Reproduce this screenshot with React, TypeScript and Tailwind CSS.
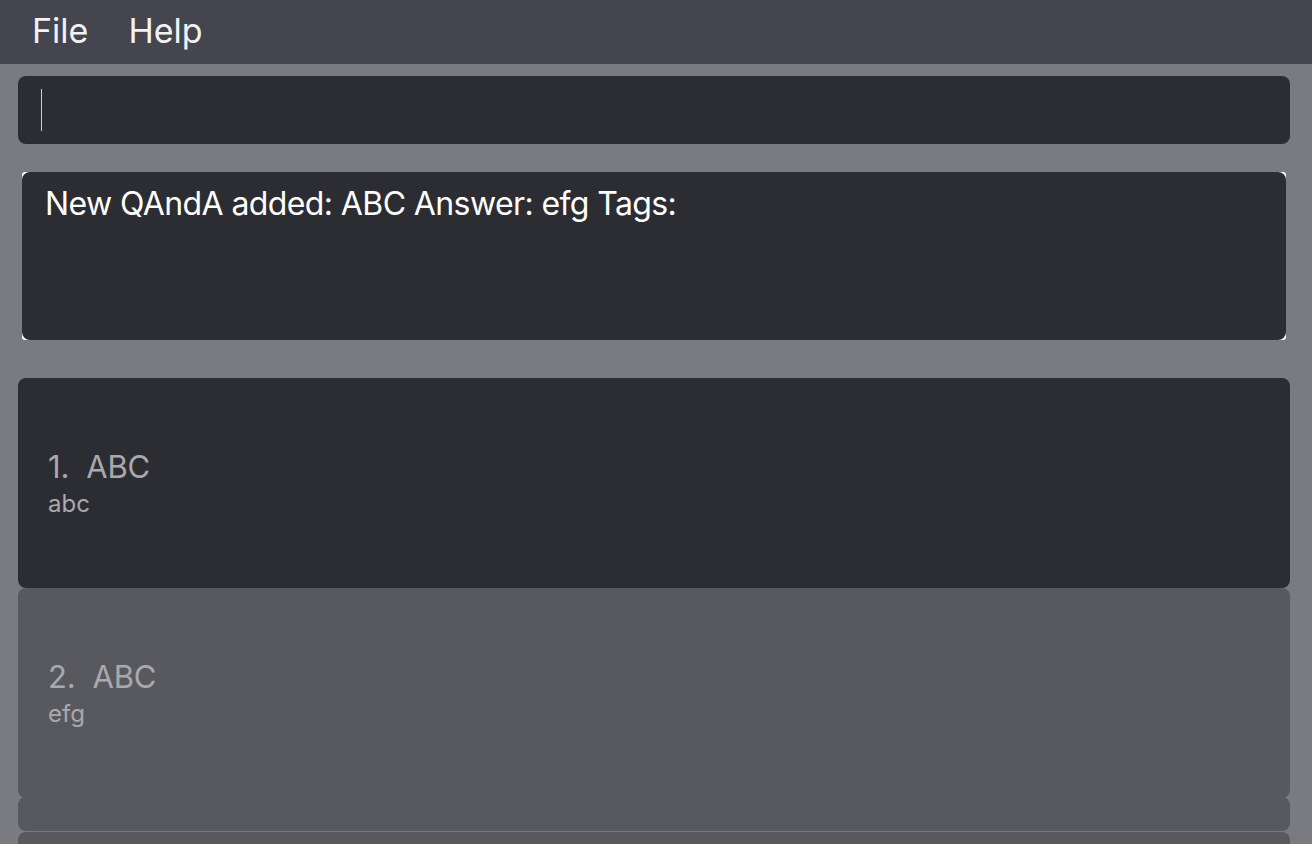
const cards = [
  { index: 1, question: "ABC", answer: "abc", selected: true },
  { index: 2, question: "ABC", answer: "efg", selected: false },
];

const App = () => {
  return (
    <div
      className="w-[1312px] h-[844px] overflow-hidden bg-[#7a7b80] flex flex-col"
      style={{ fontFamily: "Inter, 'Noto Sans', sans-serif" }}
    >
      <div className="h-[64px] shrink-0 bg-[#44454f] flex items-center pl-[32px] pb-[3px] gap-[40px] text-[34px] text-[#f2f2f2]">
        <span>File</span>
        <span>Help</span>
      </div>

      <div className="ml-[18px] mr-[22px] mt-[12px] h-[68px] shrink-0 rounded-[8px] bg-[#2c2d33] flex items-center pl-[23px]">
        <div className="w-[1px] h-[42px] bg-[#cfcfd2]" />
      </div>

      <div className="ml-[22px] mr-[26px] mt-[28px] h-[168px] shrink-0 rounded-[3px] bg-white">
        <div className="h-full rounded-[8px] bg-[#2c2d33] px-[23px] pt-[12px]">
          <p className="text-[32px] text-white leading-[40px] tracking-[-0.6px]">
            New QAndA added: ABC Answer: efg Tags:
          </p>
        </div>
      </div>

      <div className="ml-[18px] mr-[22px] mt-[38px] flex flex-col">
        {cards.map((c) => (
          <div
            key={c.index}
            className={`h-[210px] shrink-0 rounded-[8px] flex flex-col justify-center pl-[30px] pt-[5px] ${
              c.selected ? "bg-[#2c2d33]" : "bg-[#58595f]"
            }`}
          >
            <p className="text-[31px] leading-[32px] text-[#a9a9ac] tracking-[-0.2px]">
              {c.index}.&nbsp; {c.question}
            </p>
            <p className="mt-[5px] text-[24px] leading-[32px] text-[#a9a9ac]">{c.answer}</p>
          </div>
        ))}
        <div className="h-[34px] shrink-0 rounded-[8px] bg-[#58595f] mt-[-1px]" />
        <div className="h-[34px] shrink-0 rounded-[8px] bg-[#58595f] mt-[1px]" />
      </div>
    </div>
  );
};

export default App;
